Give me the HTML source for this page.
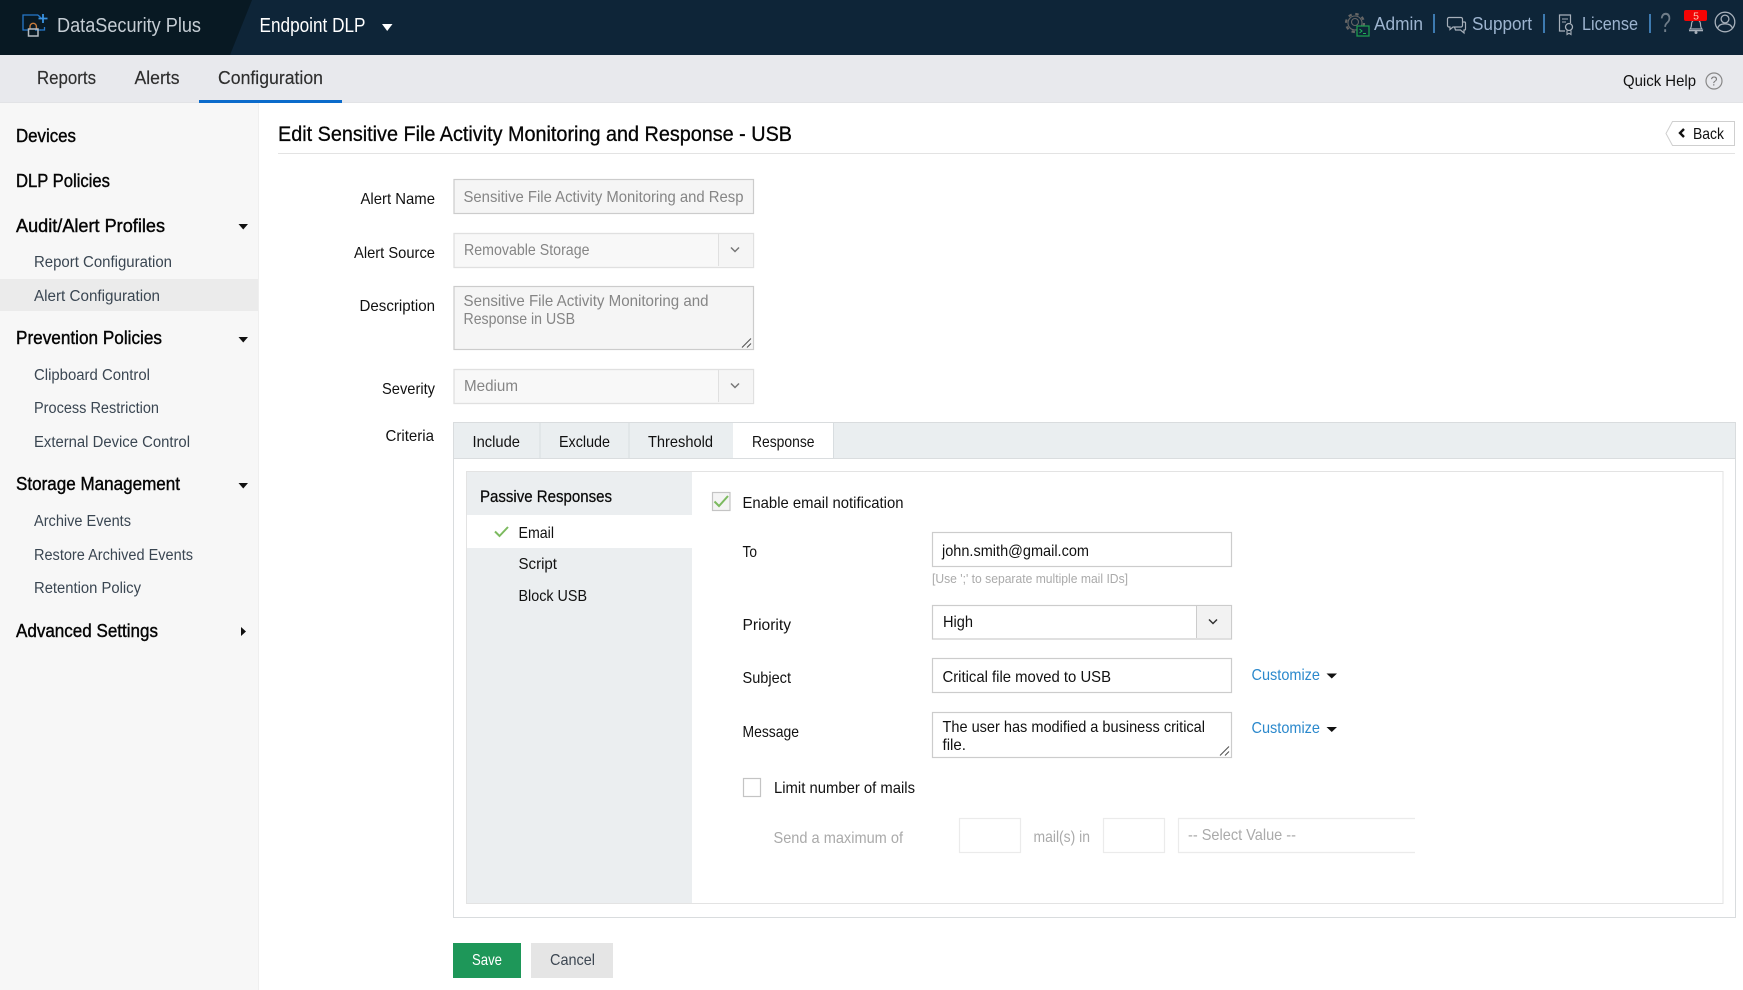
<!DOCTYPE html>
<html lang="en">
<head>
<meta charset="utf-8">
<title>Edit Sensitive File Activity Monitoring and Response - USB</title>
<style>
html,body{margin:0;padding:0;background:#fff;width:1743px;height:990px;overflow:hidden}
svg{display:block;font-family:"Liberation Sans",sans-serif}
text{white-space:pre}
.l{font-size:16px;fill:#111}
.d{font-size:16px;fill:#858585}
.h{font-size:18px;fill:#050505;stroke:#050505;stroke-width:.4px}
.s{font-size:15.5px;fill:#3a4652}
.n{font-size:18px;fill:#2e2e2e;stroke:#2e2e2e;stroke-width:.15px}
.t{font-size:18px;fill:#9db4cf}
.c{font-size:16px;fill:#2a88cc}
.g{font-size:16px;fill:#aaaaaa}
</style>
</head>
<body>
<svg width="1743" height="990" viewBox="0 0 1743 990" xmlns="http://www.w3.org/2000/svg">
<!-- header -->
<rect width="1743" height="55" fill="#0e2538"/>
<polygon points="0,0 252,0 230,55 0,55" fill="#081923"/>
<!-- logo -->
<path d="M38 15H23V30H28M41 30H35M35 15" fill="none" stroke="#2677c9" stroke-width="1.3"/>
<path d="M38 15l3 3" stroke="#2677c9" stroke-width="1.3"/>
<path d="M44.500 27V30H40" fill="none" stroke="#2677c9" stroke-width="1.300"/>
<path d="M43 14v9M38.500 18.500h9" stroke="#3a92e0" stroke-width="1.800"/>
<path d="M30 29v-2.500a3.200 3.200 0 0 1 6.400 0V29" fill="none" stroke="#c77a3a" stroke-width="1.400"/>
<rect x="28.500" y="29" width="9.500" height="7" fill="none" stroke="#b5bcc2" stroke-width="1.500"/>
<text x="57" y="32" font-size="20" fill="#c5cdd4" textLength="144" lengthAdjust="spacingAndGlyphs">DataSecurity Plus</text>
<text x="259.500" y="32" font-size="20" fill="#ffffff" textLength="106" lengthAdjust="spacingAndGlyphs">Endpoint DLP</text>
<polygon points="382,24 392.500,24 387.200,31" fill="#fff"/>

<!-- header right -->
<circle cx="1355" cy="23" r="7" fill="none" stroke="#666" stroke-width="1.100"/>
<circle cx="1355" cy="22" r="3.500" fill="none" stroke="#666" stroke-width="1.100"/>
<circle cx="1355" cy="23" r="9" fill="none" stroke="#666" stroke-width="2.200" stroke-dasharray="3.400 3.670"/>
<rect x="1357" y="26" width="12" height="10" fill="#0e2538" stroke="#1f9a4f" stroke-width="1.300"/>
<path d="M1359.500 29l2.500 2-2.500 2M1363 33.500h3" fill="none" stroke="#1fb05a" stroke-width="1"/>
<text class="t" x="1374" y="30" textLength="49" lengthAdjust="spacingAndGlyphs">Admin</text>
<rect x="1433" y="14" width="2" height="19" fill="#3d7ab0"/>
<path d="M1449 17.500h12a1.500 1.500 0 0 1 1.500 1.500v6.500a1.500 1.500 0 0 1-1.500 1.500h-8l-3 2.500v-2.500h-1a1.500 1.500 0 0 1-1.500-1.500V19a1.500 1.500 0 0 1 1.500-1.500z" fill="none" stroke="#a7b0ba" stroke-width="1.200"/>
<path d="M1463 22h1.500a1 1 0 0 1 1 1v6a1 1 0 0 1-1 1H1464v3l-3.500-3h-5l-1-3" fill="none" stroke="#a7b0ba" stroke-width="1.200"/>
<text class="t" x="1472" y="30" textLength="60" lengthAdjust="spacingAndGlyphs">Support</text>
<rect x="1543" y="14" width="2" height="19" fill="#3d7ab0"/>
<path d="M1565 31h-5.500V15h11v8" fill="none" stroke="#a7b0ba" stroke-width="1.200"/>
<path d="M1562 19h6M1562 22h4" stroke="#a7b0ba" stroke-width="1"/>
<circle cx="1569" cy="27" r="3.500" fill="none" stroke="#a7b0ba" stroke-width="1.300"/>
<path d="M1567 30.500V34.500l2-1.200 2 1.200v-4" fill="none" stroke="#a7b0ba" stroke-width="1.100"/>
<text class="t" x="1582" y="30" textLength="56" lengthAdjust="spacingAndGlyphs">License</text>
<rect x="1649" y="14" width="2" height="19" fill="#3d7ab0"/>
<text x="1660" y="32" font-size="28" fill="#6f7d89" textLength="11" lengthAdjust="spacingAndGlyphs">?</text>
<path d="M1690 29c1.500-1.500 1.500-3 1.500-5a4.500 4.500 0 0 1 9 0c0 2 0 3.500 1.500 5z" fill="none" stroke="#a7b0ba" stroke-width="1.200"/>
<rect x="1689" y="30" width="14" height="1.300" fill="#a7b0ba"/>
<circle cx="1696" cy="32.500" r="1.500" fill="#a7b0ba"/>
<rect x="1684" y="10" width="23" height="11" rx="2" fill="#f40404"/>
<text x="1696" y="19.500" font-size="10.500" fill="#f7c9b5" text-anchor="middle">5</text>
<circle cx="1725" cy="22" r="9.800" fill="none" stroke="#a7b0ba" stroke-width="1.300"/>
<circle cx="1725" cy="19" r="3.900" fill="none" stroke="#a7b0ba" stroke-width="1.300"/>
<path d="M1717.500 28.500c1-3.500 4-4.700 7.500-4.700s6.500 1.200 7.500 4.700" fill="none" stroke="#a7b0ba" stroke-width="1.300"/>

<!-- subnav -->
<rect y="55" width="1743" height="48" fill="#e8e9ed"/>
<rect y="102" width="1743" height="1" fill="#e2e3e6"/>
<text class="n" x="37" y="84" textLength="59" lengthAdjust="spacingAndGlyphs">Reports</text>
<text class="n" x="134.500" y="84" textLength="45" lengthAdjust="spacingAndGlyphs">Alerts</text>
<text class="n" x="218" y="84" textLength="105" lengthAdjust="spacingAndGlyphs">Configuration</text>
<rect x="199" y="100" width="143" height="3" fill="#0b6bcb"/>
<text x="1623" y="86" font-size="16" fill="#111" textLength="73" lengthAdjust="spacingAndGlyphs">Quick Help</text>
<circle cx="1714" cy="81" r="8" fill="none" stroke="#888" stroke-width="1.200"/>
<text x="1714" y="85.500" font-size="12.500" fill="#777" text-anchor="middle">?</text>

<!-- sidebar -->
<rect y="103" width="258" height="887" fill="#f7f7f7"/>
<rect x="258" y="103" width="1" height="887" fill="#efefef"/>
<rect y="279" width="258" height="32" fill="#ebebeb"/>
<text class="h" x="16" y="142" textLength="60" lengthAdjust="spacingAndGlyphs">Devices</text>
<text class="h" x="16" y="187" textLength="94" lengthAdjust="spacingAndGlyphs">DLP Policies</text>
<text class="h" x="16" y="232" textLength="149" lengthAdjust="spacingAndGlyphs">Audit/Alert Profiles</text>
<polygon points="238.500,224 248,224 243.250,229.500" fill="#111"/>
<text class="s" x="34" y="267" textLength="138" lengthAdjust="spacingAndGlyphs">Report Configuration</text>
<text class="s" x="34" y="301" textLength="126" lengthAdjust="spacingAndGlyphs">Alert Configuration</text>
<text class="h" x="16" y="344" textLength="146" lengthAdjust="spacingAndGlyphs">Prevention Policies</text>
<polygon points="238.500,337 248,337 243.250,342.500" fill="#111"/>
<text class="s" x="34" y="380" textLength="116" lengthAdjust="spacingAndGlyphs">Clipboard Control</text>
<text class="s" x="34" y="413" textLength="125" lengthAdjust="spacingAndGlyphs">Process Restriction</text>
<text class="s" x="34" y="447" textLength="156" lengthAdjust="spacingAndGlyphs">External Device Control</text>
<text class="h" x="16" y="490" textLength="164" lengthAdjust="spacingAndGlyphs">Storage Management</text>
<polygon points="238.500,483 248,483 243.250,488.500" fill="#111"/>
<text class="s" x="34" y="526" textLength="97" lengthAdjust="spacingAndGlyphs">Archive Events</text>
<text class="s" x="34" y="560" textLength="159" lengthAdjust="spacingAndGlyphs">Restore Archived Events</text>
<text class="s" x="34" y="593" textLength="107" lengthAdjust="spacingAndGlyphs">Retention Policy</text>
<text class="h" x="16" y="637" textLength="142" lengthAdjust="spacingAndGlyphs">Advanced Settings</text>
<polygon points="241,627 246,631.500 241,636" fill="#111"/>

<!-- title -->
<text x="278" y="141" font-size="21" fill="#050505" stroke="#050505" stroke-width=".3" textLength="514" lengthAdjust="spacingAndGlyphs">Edit Sensitive File Activity Monitoring and Response - USB</text>
<rect x="278" y="153" width="1457" height="1" fill="#e3e3e3"/>
<path d="M1672.500 121.500H1734.500V145.500H1672.500L1666 133.500z" fill="#fff" stroke="#cfcfcf"/>
<path d="M1684 129l-4 4 4 4" fill="none" stroke="#111" stroke-width="2.400"/>
<text x="1693" y="139" font-size="16" fill="#111" textLength="31" lengthAdjust="spacingAndGlyphs">Back</text>

<!-- form left -->
<text class="l" x="360.500" y="204" textLength="74.500" lengthAdjust="spacingAndGlyphs">Alert Name</text>
<rect x="454" y="179.500" width="299.500" height="34" fill="#f5f5f5" stroke="#cccccc" stroke-width="1.200"/>
<text class="d" x="463.500" y="202" textLength="280" lengthAdjust="spacingAndGlyphs">Sensitive File Activity Monitoring and Resp</text>

<text class="l" x="354" y="258" textLength="81" lengthAdjust="spacingAndGlyphs">Alert Source</text>
<rect x="454" y="233.500" width="299.500" height="34" fill="#f8f8f8" stroke="#e0e0e0" stroke-width="1.300"/>
<rect x="718" y="234" width="1" height="32" fill="#e0e0e0"/>
<rect x="719" y="234.500" width="34" height="32.500" fill="#f5f5f5"/>
<path d="M731 247.500l4 4 4-4" fill="none" stroke="#777" stroke-width="1.500"/>
<text class="d" x="464" y="255" textLength="125.500" lengthAdjust="spacingAndGlyphs">Removable Storage</text>

<text class="l" x="359.500" y="311" textLength="75.500" lengthAdjust="spacingAndGlyphs">Description</text>
<rect x="454" y="286.500" width="299.500" height="63" fill="#f5f5f5" stroke="#cccccc" stroke-width="1.200"/>
<text class="d" x="463.500" y="306" textLength="245" lengthAdjust="spacingAndGlyphs">Sensitive File Activity Monitoring and</text>
<text class="d" x="463.500" y="324" textLength="111.500" lengthAdjust="spacingAndGlyphs">Response in USB</text>
<path d="M742 347.500l9-9M747 347.500l4-4" stroke="#555" stroke-width="1.100"/>

<text class="l" x="382" y="394" textLength="53" lengthAdjust="spacingAndGlyphs">Severity</text>
<rect x="454" y="369.500" width="299.500" height="34" fill="#f8f8f8" stroke="#e0e0e0" stroke-width="1.300"/>
<rect x="718" y="370" width="1" height="32" fill="#e0e0e0"/>
<rect x="719" y="370.500" width="34" height="32.500" fill="#f5f5f5"/>
<path d="M731 383.500l4 4 4-4" fill="none" stroke="#777" stroke-width="1.500"/>
<text class="d" x="464" y="391" textLength="54" lengthAdjust="spacingAndGlyphs">Medium</text>

<text class="l" x="385.500" y="441" textLength="48.500" lengthAdjust="spacingAndGlyphs">Criteria</text>

<!-- tabs -->
<rect x="453.500" y="422.500" width="1282" height="495" fill="#fff" stroke="#d9dcde"/>
<rect x="454" y="423" width="1281" height="35" fill="#eaeef0"/>
<rect x="454" y="458" width="1281" height="1" fill="#dadddf"/>
<rect x="539.500" y="423" width="1" height="35" fill="#d8dde0"/>
<rect x="628.500" y="423" width="1" height="35" fill="#d8dde0"/>
<rect x="733" y="423" width="100" height="35" fill="#fff"/>
<rect x="833" y="423" width="1" height="35" fill="#d8dde0"/>
<text class="l" x="472.500" y="447" textLength="47.500" lengthAdjust="spacingAndGlyphs">Include</text>
<text class="l" x="559" y="447" textLength="51" lengthAdjust="spacingAndGlyphs">Exclude</text>
<text class="l" x="648" y="447" textLength="65" lengthAdjust="spacingAndGlyphs">Threshold</text>
<text class="l" x="752" y="447" textLength="62.500" lengthAdjust="spacingAndGlyphs">Response</text>

<!-- inner panel -->
<rect x="466.500" y="471.500" width="1256.500" height="432" fill="#fff" stroke="#e3e3e3"/>
<rect x="467" y="472" width="225" height="431" fill="#ebeef0"/>
<text x="480" y="502" font-size="17" fill="#0a0a0a" stroke="#0a0a0a" stroke-width=".25" textLength="132" lengthAdjust="spacingAndGlyphs">Passive Responses</text>
<rect x="467" y="515" width="225" height="33" fill="#fff"/>
<path d="M495 531.500l4.500 4.500 8.500-9" fill="none" stroke="#7cba5f" stroke-width="2"/>
<text class="l" x="518.500" y="538" textLength="35.500" lengthAdjust="spacingAndGlyphs">Email</text>
<text class="l" x="518.500" y="569" textLength="38.500" lengthAdjust="spacingAndGlyphs">Script</text>
<text class="l" x="518.500" y="601" textLength="68.500" lengthAdjust="spacingAndGlyphs">Block USB</text>

<rect x="712.500" y="492.500" width="17.500" height="18" fill="#f4f4f4" stroke="#c4c4c4" stroke-width="1.200"/>
<path d="M714.500 501.500l4.500 4.500 9-10" fill="none" stroke="#7cba5f" stroke-width="2"/>
<text class="l" x="742.500" y="508" textLength="161" lengthAdjust="spacingAndGlyphs">Enable email notification</text>

<text class="l" x="742.500" y="557" textLength="14.500" lengthAdjust="spacingAndGlyphs">To</text>
<rect x="932.500" y="532.500" width="299" height="34" fill="#fff" stroke="#cccccc" stroke-width="1.200"/>
<text class="l" x="942" y="556" textLength="147" lengthAdjust="spacingAndGlyphs">john.smith@gmail.com</text>
<text x="932" y="583" font-size="13" fill="#aaaaaa" textLength="196" lengthAdjust="spacingAndGlyphs">[Use ';' to separate multiple mail IDs]</text>

<text class="l" x="742.500" y="630" textLength="48.500" lengthAdjust="spacingAndGlyphs">Priority</text>
<rect x="932.500" y="605.500" width="299" height="33.500" fill="#fff" stroke="#cccccc" stroke-width="1.200"/>
<rect x="1197" y="606" width="34" height="32.500" fill="#f2f2f2"/>
<rect x="1196" y="606" width="1" height="32" fill="#cccccc"/>
<path d="M1209 619.500l4 4 4-4" fill="none" stroke="#333" stroke-width="1.500"/>
<text class="l" x="943" y="627" textLength="30" lengthAdjust="spacingAndGlyphs">High</text>

<text class="l" x="742.500" y="683" textLength="48.500" lengthAdjust="spacingAndGlyphs">Subject</text>
<rect x="932.500" y="658.500" width="299" height="34" fill="#fff" stroke="#cccccc" stroke-width="1.200"/>
<text class="l" x="942.500" y="682" textLength="168.500" lengthAdjust="spacingAndGlyphs">Critical file moved to USB</text>
<text class="c" x="1251.500" y="680" textLength="68.500" lengthAdjust="spacingAndGlyphs">Customize</text>
<polygon points="1326.500,673.500 1337,673.500 1331.750,678.500" fill="#111"/>

<text class="l" x="742.500" y="737" textLength="56.500" lengthAdjust="spacingAndGlyphs">Message</text>
<rect x="932.500" y="712.500" width="299" height="45" fill="#fff" stroke="#cccccc" stroke-width="1.200"/>
<text class="l" x="942.500" y="732" textLength="262.500" lengthAdjust="spacingAndGlyphs">The user has modified a business critical</text>
<text class="l" x="942.500" y="750" textLength="23.500" lengthAdjust="spacingAndGlyphs">file.</text>
<path d="M1220 755.500l9-9M1225 755.500l4-4" stroke="#555" stroke-width="1.100"/>
<text class="c" x="1251.500" y="733" textLength="68.500" lengthAdjust="spacingAndGlyphs">Customize</text>
<polygon points="1326.500,727 1337,727 1331.750,732" fill="#111"/>

<rect x="743.500" y="778.500" width="17" height="18" fill="#fff" stroke="#c4c4c4" stroke-width="1.200"/>
<text class="l" x="774" y="793" textLength="141" lengthAdjust="spacingAndGlyphs">Limit number of mails</text>
<text class="g" x="773.500" y="843" textLength="129.500" lengthAdjust="spacingAndGlyphs">Send a maximum of</text>
<rect x="959.500" y="818.500" width="61" height="34" fill="#fff" stroke="#ebebeb" stroke-width="1.200"/>
<text class="g" x="1033.500" y="842" textLength="56.500" lengthAdjust="spacingAndGlyphs">mail(s) in</text>
<rect x="1103.500" y="818.500" width="61" height="34" fill="#fff" stroke="#ebebeb" stroke-width="1.200"/>
<path d="M1415 818.500H1178.500V852.500H1415" fill="#fff" stroke="#ebebeb" stroke-width="1.200"/>
<text class="g" x="1188" y="840" textLength="108" lengthAdjust="spacingAndGlyphs">-- Select Value --</text>

<!-- buttons -->
<rect x="453" y="943" width="68" height="35" fill="#1e9759"/>
<text x="472" y="965" font-size="16" fill="#fff" textLength="30" lengthAdjust="spacingAndGlyphs">Save</text>
<rect x="531" y="943" width="82" height="35" fill="#e5e5e5"/>
<text x="550" y="965" font-size="16" fill="#3d4752" textLength="45" lengthAdjust="spacingAndGlyphs">Cancel</text>
</svg>
</body>
</html>
